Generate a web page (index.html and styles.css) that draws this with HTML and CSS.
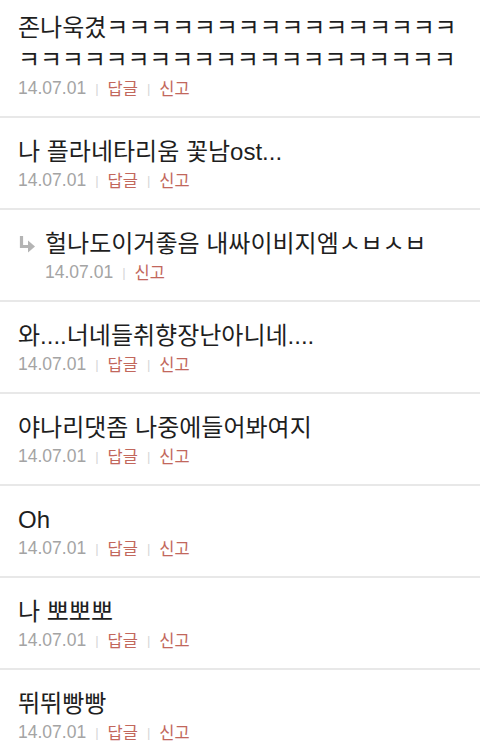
FILE: index.html
```html
<!DOCTYPE html>
<html lang="ko">
<head>
<meta charset="utf-8">
<link rel="stylesheet" href="styles.css">
</head>
<body>
<ul class="comments">
  <li class="comment first">
    <p class="text">존나욱겼<span class="jamo">ㅋㅋㅋㅋㅋㅋㅋㅋㅋㅋㅋㅋㅋㅋㅋㅋㅋㅋㅋㅋㅋㅋㅋㅋㅋㅋㅋㅋㅋㅋㅋㅋㅋㅋㅋㅋ</span></p>
    <div class="meta"><span class="date">14.07.01</span><span class="sep">|</span><a class="act">답글</a><span class="sep">|</span><a class="act">신고</a></div>
  </li>
  <li class="comment">
    <p class="text">나 플라네타리움 꽃남ost...</p>
    <div class="meta"><span class="date">14.07.01</span><span class="sep">|</span><a class="act">답글</a><span class="sep">|</span><a class="act">신고</a></div>
  </li>
  <li class="comment reply">
    <svg class="reply-icon" width="18" height="18" viewBox="0 0 18 18"><path d="M3.5 1 V11.5 H11" fill="none" stroke="#b4b4b4" stroke-width="3.2"/><path d="M10 5.5 L17 11.5 L10 17.5 Z" fill="#b4b4b4"/></svg>
    <div class="body">
      <p class="text">헐나도이거좋음 내싸이비지엠<span class="jamo">ㅅㅂㅅㅂ</span></p>
      <div class="meta"><span class="date">14.07.01</span><span class="sep">|</span><a class="act">신고</a></div>
    </div>
  </li>
  <li class="comment">
    <p class="text">와....너네들취향장난아니네....</p>
    <div class="meta"><span class="date">14.07.01</span><span class="sep">|</span><a class="act">답글</a><span class="sep">|</span><a class="act">신고</a></div>
  </li>
  <li class="comment">
    <p class="text">야나리댓좀 나중에들어봐여지</p>
    <div class="meta"><span class="date">14.07.01</span><span class="sep">|</span><a class="act">답글</a><span class="sep">|</span><a class="act">신고</a></div>
  </li>
  <li class="comment">
    <p class="text">Oh</p>
    <div class="meta"><span class="date">14.07.01</span><span class="sep">|</span><a class="act">답글</a><span class="sep">|</span><a class="act">신고</a></div>
  </li>
  <li class="comment">
    <p class="text">나 뽀뽀뽀</p>
    <div class="meta"><span class="date">14.07.01</span><span class="sep">|</span><a class="act">답글</a><span class="sep">|</span><a class="act">신고</a></div>
  </li>
  <li class="comment">
    <p class="text">뛰뛰빵빵</p>
    <div class="meta"><span class="date">14.07.01</span><span class="sep">|</span><a class="act">답글</a><span class="sep">|</span><a class="act">신고</a></div>
  </li>
</ul>
</body>
</html>
```

FILE: styles.css
```css
* { box-sizing: border-box; }
html, body {
  margin: 0;
  padding: 0;
  background: #fff;
  overflow: hidden;
}
body {
  font-family: "Liberation Sans", "Noto Sans CJK KR", sans-serif;
  color: #1e1e1e;
}
.comments {
  list-style: none;
  margin: 0;
  padding: 0;
}
.comment {
  padding: 18px 15px 16px 18px;
  border-bottom: 2px solid #e8e8e8;
}
.comment.first {
  padding-top: 12px;
}
.text {
  margin: 0;
  font-size: 24px;
  line-height: 32px;
  word-break: break-all;
}
.jamo {
  letter-spacing: -0.2px;
}
.meta {
  display: flex;
  align-items: center;
  height: 24px;
  font-size: 17.5px;
}
.date {
  color: #a4a4a4;
}
.sep {
  color: #d6d6d6;
  font-size: 13px;
  margin: 0 9px;
}
.act {
  color: #c2675c;
  font-size: 16.5px;
}
.reply {
  display: flex;
  gap: 9px;
}
.reply-icon {
  flex: none;
  margin-top: 7px;
}
```
